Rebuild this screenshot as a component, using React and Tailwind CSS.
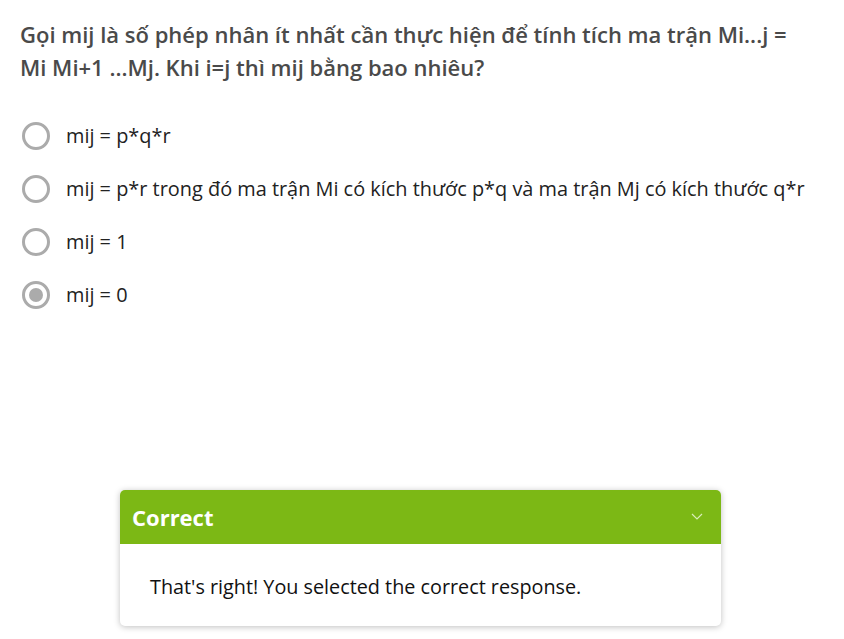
import React, { useState } from 'react';

const options = [
    'mij = p*q*r',
    'mij = p*r trong đó ma trận Mi có kích thước p*q và ma trận Mj có kích thước q*r',
    'mij = 1',
    'mij = 0',
];

const App = () => {
    const [selected, setSelected] = useState(3);

    return (
        <div className="w-[844px] h-[639px] bg-white overflow-hidden" style={{ fontFamily: '"Open Sans", sans-serif' }}>
            <div className="px-5 pt-[18px]">
                <h1 className="w-[790px] text-[22px] leading-[33px] font-semibold text-[#4a4a4a]">
                    Gọi mij là số phép nhân ít nhất cần thực hiện để tính tích ma trận Mi...j = Mi Mi+1 ...Mj. Khi i=j thì mij bằng bao nhiêu?
                </h1>

                {/* Options */}
                <div className="mt-[25px] flex flex-col">
                    {options.map((opt, i) => (
                        <label key={i} className="h-[53px] flex items-center gap-4 cursor-pointer" onClick={() => setSelected(i)}>
                            <span className="ml-[2px] w-[28px] h-[28px] rounded-full border-[3px] border-[#ababab] flex items-center justify-center shrink-0">
                                {selected === i && <span className="w-[14px] h-[14px] rounded-full bg-[#ababab]" />}
                            </span>
                            <span className="text-[19.9px] text-[#222] whitespace-nowrap">{opt}</span>
                        </label>
                    ))}
                </div>
            </div>

            {/* Feedback */}
            <div className="mt-[169px] ml-[120px] w-[601px] rounded-[5px] bg-white shadow-[0_1px_6px_rgba(0,0,0,0.25)] overflow-hidden">
                <div className="h-[54px] bg-[#7cb815] flex items-center justify-between pl-3 pr-[18px]">
                    <span className="text-[22px] font-bold text-white">Correct</span>
                    <svg width="12" height="8" viewBox="0 0 12 8" fill="none">
                        <path d="M1 1l5 5 5-5" stroke="#d9ecb8" strokeWidth="1.2" />
                    </svg>
                </div>
                <div className="h-[82px] flex items-center px-[30px] pt-[4px]">
                    <p className="text-[19.8px] text-[#111]">That's right! You selected the correct response.</p>
                </div>
            </div>
        </div>
    );
};

export default App;
